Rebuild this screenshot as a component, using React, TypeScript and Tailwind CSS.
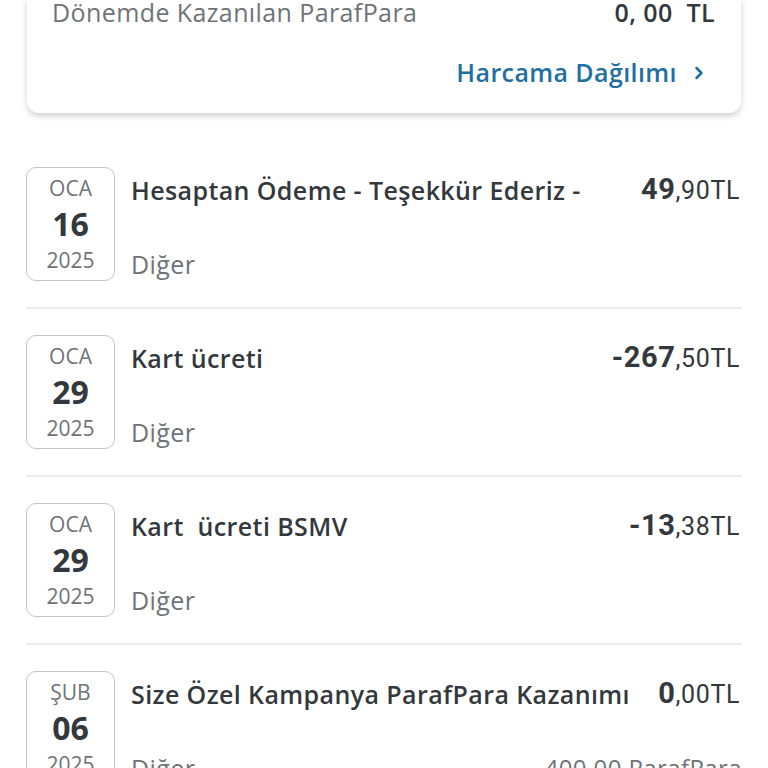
import { ChevronRight } from "lucide-react";

type Txn = {
  month: string;
  day: string;
  year: string;
  title: string;
  whole: string;
  frac: string;
  extra?: string;
};

const txns: Txn[] = [
  { month: "OCA", day: "16", year: "2025", title: "Hesaptan Ödeme - Teşekkür Ederiz -", whole: "49", frac: ",90TL" },
  { month: "OCA", day: "29", year: "2025", title: "Kart ücreti", whole: "-267", frac: ",50TL" },
  { month: "OCA", day: "29", year: "2025", title: "Kart  ücreti BSMV", whole: "-13", frac: ",38TL" },
  { month: "ŞUB", day: "06", year: "2025", title: "Size Özel Kampanya ParafPara Kazanımı", whole: "0", frac: ",00TL", extra: "400,00 ParafPara" },
];

function TxnRow({ t }: { t: Txn }) {
  return (
    <div className="flex gap-4 pt-[26px] pb-[26px] border-b-2 border-[#ececec]">
      <div className="w-[89px] h-[114px] shrink-0 rounded-[10px] border border-[#c4c4c4] flex flex-col items-center">
        <span className="mt-[6px] text-[21px] leading-[28px] text-[#6f7378]">{t.month}</span>
        <span className="mt-[4px] text-[32px] leading-[36px] font-bold text-[#33383d]">{t.day}</span>
        <span className="mt-[4px] text-[21px] leading-[28px] text-[#6f7378]">{t.year}</span>
      </div>
      <div className="flex-1 min-w-0 h-[114px] flex flex-col justify-between pt-[8px] pb-[2px]">
        <div className="flex items-center justify-between h-[30px]">
          <span className="text-[25px] tracking-[0.4px] leading-[30px] font-semibold text-[#33383d] whitespace-pre">{t.title}</span>
          <span className="mt-[3px] pr-[2px] text-[#33383d] font-['Roboto',sans-serif] whitespace-nowrap leading-[30px] tracking-[0.6px]">
            <span className="text-[29px] font-bold">{t.whole}</span>
            <span className="text-[25px]">{t.frac}</span>
          </span>
        </div>
        <div className="flex items-center justify-between h-[30px]">
          <span className="text-[25px] tracking-[0.4px] leading-[30px] text-[#6f7378]">Diğer</span>
          {t.extra && <span className="text-[24px] tracking-[0.4px] leading-[30px] text-[#6f7378]">{t.extra}</span>}
        </div>
      </div>
    </div>
  );
}

export default function App() {
  return (
    <div className="w-[768px] h-[768px] overflow-hidden bg-white font-['Open_Sans','Noto_Sans',sans-serif]">
      <div className="px-[27px]">
        <div className="-mt-[2px] rounded-b-[12px] bg-white shadow-[0_3px_6px_rgba(0,0,0,0.18)] pl-[25px] pr-[26px] pb-[25px]">
          <div className="flex items-center justify-between h-[30px]">
            <span className="text-[25px] tracking-[0.4px] text-[#6f7378]">Dönemde Kazanılan ParafPara</span>
            <span className="text-[25px] tracking-[0.4px] font-semibold text-[#33383d]">0, 00&nbsp; TL</span>
          </div>
          <div className="flex items-center justify-end h-[30px] mt-[30px] gap-3 pr-[6px]">
            <span className="text-[25px] tracking-[0.4px] font-semibold text-[#1f6fa3]">Harcama Dağılımı</span>
            <ChevronRight className="w-5 h-5 text-[#1f6fa3]" strokeWidth={3} />
          </div>
        </div>
      </div>
      <div className="mt-[28px] pl-[26px] pr-[26px]">
        {txns.map((t, i) => (
          <TxnRow key={i} t={t} />
        ))}
      </div>
    </div>
  );
}
